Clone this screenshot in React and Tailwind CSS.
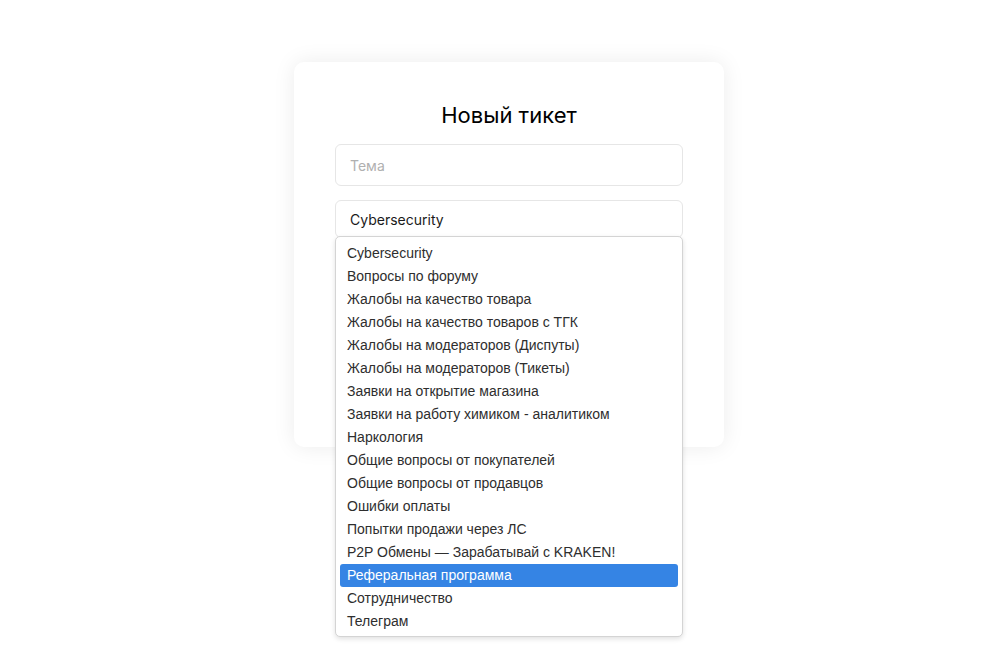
import React from "react";

const items = [
  "Cybersecurity",
  "Вопросы по форуму",
  "Жалобы на качество товара",
  "Жалобы на качество товаров с ТГК",
  "Жалобы на модераторов (Диспуты)",
  "Жалобы на модераторов (Тикеты)",
  "Заявки на открытие магазина",
  "Заявки на работу химиком - аналитиком",
  "Наркология",
  "Общие вопросы от покупателей",
  "Общие вопросы от продавцов",
  "Ошибки оплаты",
  "Попытки продажи через ЛС",
  "P2P Обмены — Зарабатывай с KRAKEN!",
  "Реферальная программа",
  "Сотрудничество",
  "Телеграм",
];

export default function App() {
  return (
    <div className="flex min-h-[654px] w-full justify-center bg-white pl-[10px] pt-[62px]" style={{ fontFamily: "Inter, 'Liberation Sans', sans-serif" }}>
      <div className="relative h-[385px] w-[430px] rounded-[10px] bg-white px-[41px] pt-[82px] shadow-[0_0_22px_rgba(0,0,0,0.08)]">
        <h1 className="absolute left-0 right-0 top-[38px] text-center text-[22px] leading-[30px] font-normal text-black">Новый тикет</h1>
        <div className="flex h-[42px] items-center rounded-[6px] border border-[#e6e6e6] px-[14px] text-[14px] text-[#b0b0b0]">
          Тема
        </div>
        <div className="relative mt-[14px]">
          <div className="flex h-[38px] items-center rounded-[6px] border border-[#e6e6e6] px-[14px] text-[14px] text-[#1a1a1a]">
            Cybersecurity
          </div>
          <div
            className="absolute left-0 top-[36px] z-10 w-full rounded-[5px] border border-[#d4d4d4] bg-white px-[4px] pt-[5px] pb-[3px] shadow-[0_2px_5px_rgba(0,0,0,0.12)]"
            style={{ fontFamily: "'Liberation Sans', Arial, sans-serif" }}
          >
            {items.map((it) => {
              const active = it === "Реферальная программа";
              return (
                <div
                  key={it}
                  className={
                    active
                      ? "flex h-[23px] items-center rounded-[3px] bg-[#3584e4] px-[7px] text-[14px] text-white"
                      : "flex h-[23px] items-center px-[7px] text-[14px] text-[#2e2e2e]"
                  }
                >
                  {it}
                </div>
              );
            })}
          </div>
        </div>
      </div>
    </div>
  );
}
